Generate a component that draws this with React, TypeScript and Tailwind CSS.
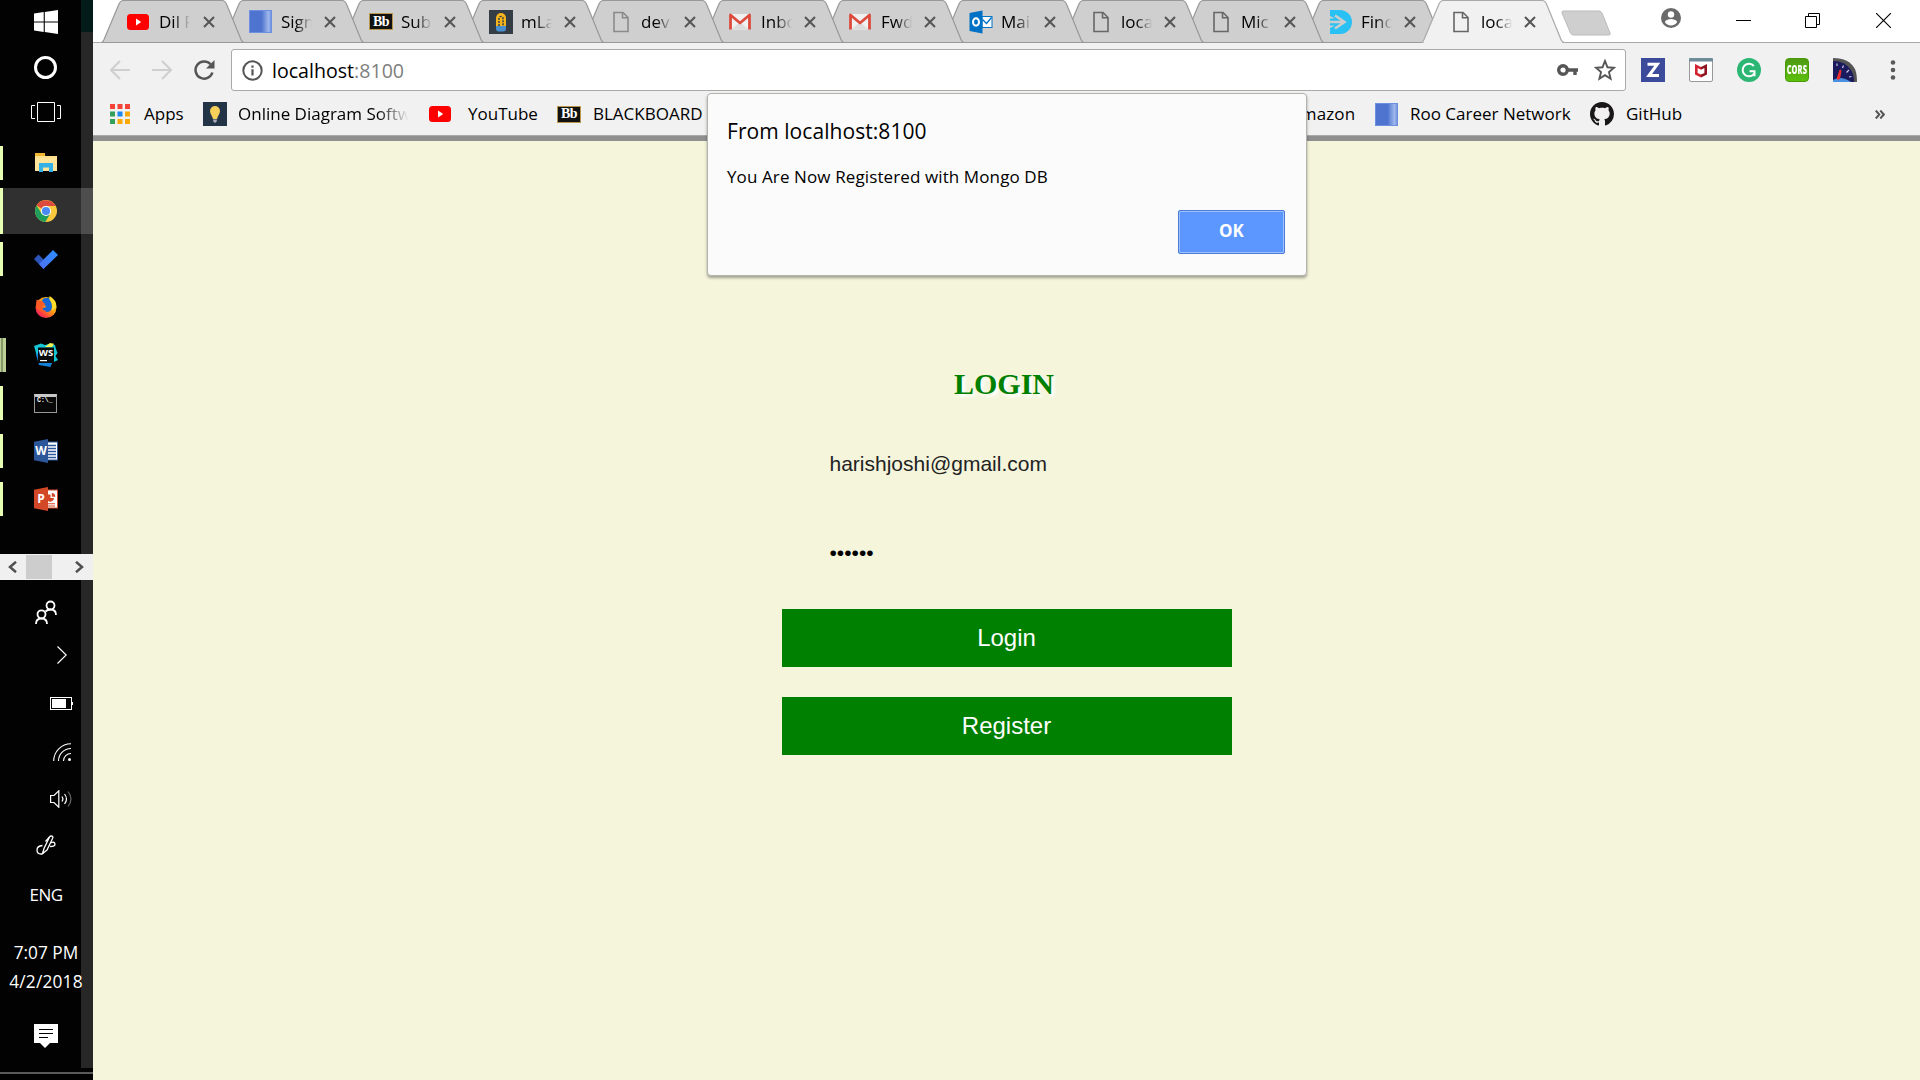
import React, { type ReactNode } from "react";

/* ---------- site icons ---------- */

const YouTubeIcon = () => (
  <svg width="22" height="16" viewBox="0 0 22 16">
    <rect width="22" height="16" rx="3.5" fill="#f00" />
    <path d="M9 4.6 14.2 8 9 11.4Z" fill="#fff" />
  </svg>
);

const BlueSquareIcon = () => (
  <svg width="23" height="23" viewBox="0 0 23 23">
    <defs>
      <linearGradient id="blueSquare" x1="0" x2="1" y1="0" y2="0">
        <stop offset="0.55" stopColor="#4f74d0" />
        <stop offset="0.85" stopColor="#a0b8ec" />
        <stop offset="1" stopColor="#5f84dc" />
      </linearGradient>
    </defs>
    <rect width="23" height="23" fill="url(#blueSquare)" />
    <rect x="0.5" y="0.5" width="22" height="22" fill="none" stroke="#6d8fe0" />
  </svg>
);

const BbIcon = () => (
  <span className="flex h-[17px] w-6 items-center justify-center border border-[#b8964a] bg-[#111] font-['Liberation_Serif',serif] text-[14px] leading-none font-bold tracking-[-0.5px] text-white">
    Bb
  </span>
);

const MLabIcon = () => (
  <svg width="24" height="24" viewBox="0 0 24 24">
    <rect width="24" height="24" fill="#343c45" />
    <path d="M7 16V8a5 5 0 0 1 10 0v8Z" fill="#f7b51c" />
    <path d="M10 16V8.500a2 2 0 0 1 4 0V16" fill="none" stroke="#343c45" strokeWidth="1.500" strokeDasharray="2 1" />
    <path d="M12 7v9" stroke="#f7b51c" strokeWidth="1" />
    <path d="M7 16h10v4l-2 1.500H9L7 20Z" fill="#4a90d0" />
  </svg>
);

const PageIcon = ({ color = "#666" }: { color?: string }) => (
  <svg width="16" height="22" viewBox="0 0 16 22" fill="none" stroke={color} strokeWidth="1.600">
    <path d="M1 1.500h9l5 5v14H1Z" />
    <path d="M9.500 1.500v5.200H15" />
  </svg>
);

const GmailIcon = () => (
  <svg width="22" height="17" viewBox="0 0 22 17">
    <rect x="1" y="1" width="20" height="15.500" rx="1" fill="#f0f0f0" />
    <path d="m3 16 8-7 8 7Z" fill="#dcdcdc" />
    <path d="M1.500 16.500V2L11 10l9.500-8v14.500" fill="none" stroke="#dd4b3e" strokeWidth="2.800" strokeLinejoin="round" />
  </svg>
);

const OutlookIcon = () => (
  <svg width="24" height="24" viewBox="0 0 24 24">
    <rect x="13" y="6.500" width="10" height="11" fill="#fff" stroke="#0072c6" />
    <path d="m13.500 9.500 4 4 5-6" fill="none" stroke="#0072c6" strokeWidth="1.300" />
    <path d="m.5 3 13-2.500v23L.5 21Z" fill="#0072c6" />
    <ellipse cx="7" cy="12" rx="3" ry="3.700" fill="none" stroke="#fff" strokeWidth="2" />
  </svg>
);

const ArrowDIcon = () => (
  <svg width="24" height="24" viewBox="0 0 24 24">
    <path d="M1 0h10a12 12 0 0 1 0 24H1v-6l5-2.500H1V8.500h5L1 6Z" fill="#29c1f3" />
    <path d="M0 12h15M6 5.500 15.500 12 6 18.500" fill="none" stroke="#cdcdcd" strokeWidth="2.600" />
  </svg>
);

const BulbIcon = () => (
  <svg width="24" height="24" viewBox="0 0 24 24">
    <rect width="24" height="24" fill="#243447" />
    <path d="M12 4a5 5 0 0 0-5 5c0 3 2.500 5 3 8h4c.5-3 3-5 3-8a5 5 0 0 0-5-5Z" fill="#f6cf5b" />
    <path d="M10.200 17.500h3.600v2L12 21l-1.800-1.500Z" fill="#aab" />
  </svg>
);

const AppsIcon = () => {
  const colors = ["#f44336", "#f44336", "#f44336", "#34a15b", "#1e88f0", "#fba90a", "#34a15b", "#fba90a", "#fba90a"];
  return (
    <svg width="20" height="20" viewBox="0 0 20 20">
      {colors.map((c, i) => (
        <rect key={i} x={(i % 3) * 7.5} y={Math.floor(i / 3) * 7.5} width="5" height="5" fill={c} />
      ))}
    </svg>
  );
};

const GitHubIcon = () => (
  <svg width="24" height="24" viewBox="0 0 16 16" fill="#191717">
    <path d="M8 0C3.580 0 0 3.580 0 8c0 3.540 2.290 6.530 5.470 7.590.4.070.55-.17.55-.38 0-.19-.01-.82-.01-1.490-2.010.37-2.530-.49-2.690-.94-.09-.23-.48-.94-.82-1.130-.28-.15-.68-.52-.01-.53.630-.01 1.080.58 1.230.82.720 1.210 1.870.87 2.330.66.070-.52.28-.87.510-1.070-1.780-.2-3.640-.89-3.640-3.950 0-.87.310-1.590.82-2.150-.08-.2-.36-1.020.080-2.120 0 0 .67-.21 2.200.82.640-.18 1.320-.27 2-.27s1.360.09 2 .27c1.530-1.040 2.200-.82 2.200-.82.440 1.100.16 1.920.080 2.120.51.560.82 1.270.82 2.150 0 3.070-1.870 3.750-3.650 3.950.29.250.54.730.54 1.480 0 1.070-.01 1.930-.01 2.200 0 .21.150.46.550.38A8.010 8.010 0 0 0 16 8c0-4.420-3.580-8-8-8Z" />
  </svg>
);

/* ---------- tab strip ---------- */

type TabInfo = { title: string; icon: ReactNode; kind: "first" | "site" | "page" | "active" };

const tabs: TabInfo[] = [
  { title: "Dil F", icon: <YouTubeIcon />, kind: "first" },
  { title: "Sign", icon: <BlueSquareIcon />, kind: "site" },
  { title: "Sub", icon: <BbIcon />, kind: "site" },
  { title: "mLa", icon: <MLabIcon />, kind: "site" },
  { title: "dev", icon: <PageIcon color="#8a8a8a" />, kind: "page" },
  { title: "Inbo", icon: <GmailIcon />, kind: "site" },
  { title: "Fwd", icon: <GmailIcon />, kind: "site" },
  { title: "Mai", icon: <OutlookIcon />, kind: "site" },
  { title: "loca", icon: <PageIcon />, kind: "page" },
  { title: "Mic", icon: <PageIcon />, kind: "page" },
  { title: "Find", icon: <ArrowDIcon />, kind: "site" },
  { title: "loca", icon: <PageIcon />, kind: "active" },
];

const iconSlot = {
  first: "ml-1 flex w-[32px] shrink-0",
  site: "ml-[6px] flex w-[32px] shrink-0",
  page: "ml-[10px] flex w-[28px] shrink-0",
  active: "ml-[10px] flex w-[28px] shrink-0",
};

const Tab = ({ tab, index }: { tab: TabInfo; index: number }) => {
  const active = tab.kind === "active";
  return (
    <div className="relative h-[43px] w-[120px] shrink-0" style={{ zIndex: active ? 30 : 20 - index }}>
      <svg className="absolute top-0 -left-[22px]" width="144" height="43" viewBox="-1 0 144 43">
        <path
          d="M-.5 42.500 C1 42 1 41.500 2 39.500 L17 4 Q18.500 .5 21.500 .5 H120 Q123 .5 124.500 4 L139 39.500 Q140 42 142 42.500"
          fill={active ? "#f1f1f1" : "#cfcfcf"}
          stroke={active ? "#a9a9a9" : "#999"}
          strokeWidth="1.200"
        />
        {active && <path d="M2 42.500H140" stroke="#f1f1f1" strokeWidth="1.600" />}
        {!active && <path d="M0 42.500H142" stroke="#999" />}
      </svg>
      <div className="relative flex h-[43px] items-center">
        <span className={iconSlot[tab.kind]}>{tab.icon}</span>
        <span className="w-[37px] shrink-0 text-[17px] leading-6 whitespace-nowrap [mask-image:linear-gradient(to_right,#000_40%,transparent_84%)]">
          {tab.title}
        </span>
        <svg
          className={tab.kind === "first" ? "mt-px ml-[7px]" : "mt-px ml-[6px]"}
          width="12"
          height="12"
          viewBox="0 0 12 12"
        >
          <path d="m1 1 10 10M11 1 1 11" stroke="#555" strokeWidth="2" />
        </svg>
      </div>
    </div>
  );
};

const TabStrip = () => (
  <div className="relative flex h-[43px] border-b border-[#a9a9a9] bg-white pl-[30px]">
    {tabs.map((t, i) => (
      <Tab key={i} tab={t} index={i} />
    ))}
    <svg className="mt-[10px] -ml-[3px]" width="53" height="26" viewBox="0 0 53 26">
      <path d="M3.500 1H39q2 0 3 2l8 20q.8 2-1 2H13.500q-2 0-3-2L2 3Q1.500 1 3.500 1Z" fill="#cfcfcf" stroke="#bbb" />
    </svg>
    <svg className="mt-[8px] ml-[48px]" width="20" height="20" viewBox="0 0 20 20">
      <circle cx="10" cy="10" r="10" fill="#6a6a6a" />
      <circle cx="10" cy="6.500" r="3.200" fill="#fff" />
      <path d="M3.800 14c1-2.200 4-3 6.200-3s5.200.8 6.200 3c-1.300 2.200-3.700 3.500-6.200 3.500S5.100 16.200 3.800 14Z" fill="#fff" />
    </svg>
    <svg className="mt-[20px] ml-[55px]" width="15" height="1">
      <rect width="15" height="1" fill="#000" />
    </svg>
    <svg className="mt-[13px] ml-[54px]" width="15" height="15" viewBox="0 0 15 15" fill="none" stroke="#000">
      <path d="M.5 3.500h11v11H.5ZM3.500 3.500v-3h11v11h-3" />
    </svg>
    <svg className="mt-[13px] ml-[56px]" width="15" height="15" viewBox="0 0 15 15" stroke="#000" strokeWidth="1.100">
      <path d="m0 0 15 15M15 0 0 15" />
    </svg>
  </div>
);

/* ---------- address bar ---------- */

const Toolbar = () => (
  <div className="flex h-[54px] items-center">
    <svg className="ml-[17px]" width="20" height="20" viewBox="0 0 20 20" fill="none" stroke="#cfcfcf" strokeWidth="2">
      <path d="M20 10H2M10 1l-9 9 9 9" />
    </svg>
    <svg className="ml-[22px]" width="20" height="20" viewBox="0 0 20 20" fill="none" stroke="#cfcfcf" strokeWidth="2">
      <path d="M0 10h18M10 1l9 9-9 9" />
    </svg>
    <svg className="ml-[22px]" width="21" height="20" viewBox="0 0 21 20">
      <path d="M16.500 4.200A8.600 8.600 0 1 0 18.400 12.500" fill="none" stroke="#555" strokeWidth="2.500" />
      <path d="M20.500 0v8.500H12Z" fill="#555" />
    </svg>
    <div className="ml-[16px] flex h-[42px] w-[1395px] items-center rounded-[3px] border border-[#a9a9a9] bg-white">
      <svg className="ml-[10px]" width="21" height="21" viewBox="0 0 21 21">
        <circle cx="10.500" cy="10.500" r="9.200" fill="none" stroke="#555" strokeWidth="2" />
        <path d="M9.400 9.200h2.200v6.300H9.400ZM9.400 5.500h2.200v2.200H9.400Z" fill="#555" />
      </svg>
      <span className="ml-[9px] pt-px text-[19.6px] leading-7">
        localhost<span className="text-[#808080]">:8100</span>
      </span>
      <svg className="ml-auto" width="21" height="12" viewBox="0 0 21 12">
        <circle cx="6" cy="6" r="4.300" fill="none" stroke="#555" strokeWidth="3.400" />
        <path d="M10 4.200h11v3.600h-1.300V11h-3.400V7.800H10Z" fill="#555" />
      </svg>
      <svg className="mr-[9px] ml-[16px]" width="22" height="22" viewBox="0 0 22 22">
        <path
          d="m11 2 2.500 6.300 6.500.5-5 4.300 1.600 6.600L11 16.200l-5.600 3.500L7 13.100 2 8.800l6.500-.5Z"
          fill="none"
          stroke="#555"
          strokeWidth="1.900"
        />
      </svg>
    </div>
    <div className="ml-[15px] flex items-center gap-6">
      <svg width="24" height="24" viewBox="0 0 24 24">
        <rect width="24" height="24" fill="#3c4a9c" />
        <path d="M6.500 6.200h9.800L8 17.500h10" fill="none" stroke="#fff" strokeWidth="3" />
      </svg>
      <svg width="24" height="24" viewBox="0 0 24 24">
        <rect x=".5" y=".5" width="23" height="23" rx="1.500" fill="#fff" stroke="#999" />
        <path d="M0 1q0-1 1-1h22q1 0 1 1v2.500H0Z" fill="#6f8c99" />
        <path d="M7.300 7.300 12 9.800v8l-4.700-2.500Z" fill="none" />
        <path d="M6 6l6 3v2.800L8.600 10v5l3.400 1.600v2.900L6 16.500Z" fill="#d3222f" />
        <path d="M18 6l-6 3v2.800l3.400-1.800v5L12 16.600v2.900l6-3Z" fill="#8f1420" />
      </svg>
      <svg width="24" height="24" viewBox="0 0 24 24">
        <circle cx="12" cy="12" r="12" fill="#2bb673" />
        <path d="M16.800 8A6.300 6.300 0 1 0 17 15.800M12.500 13.300h5v5" fill="none" stroke="#fff" strokeWidth="2" />
      </svg>
      <span className="flex size-6 items-center justify-center rounded-[4px] border border-[#4a9a08] bg-linear-to-b from-[#4f9a12] to-[#5cc00c]">
        <span className="scale-x-[0.68] scale-y-110 text-[11px] leading-3 font-extrabold text-white">CORS</span>
      </span>
      <svg width="24" height="24" viewBox="0 0 24 24">
        <path d="M0 0q16 0 22 11 2 5 2 13H0Z" fill="#555" />
        <path d="M0 3q12 0 18 9 3 5 3 12H0Z" fill="#1a1a5c" />
        <path d="M0 24v-2q8-5 18 2Z" fill="#4a90e0" />
        <path d="m4 21 3-9 1 .5L6.500 21Z" fill="#f03030" stroke="#f03030" />
        <path d="M4 5.500v2.500M10.500 7.500l-1 2.500M16 12l-2.500 2.500M18.500 18.500l-2.500.5" stroke="#c8c8e8" strokeWidth="1.200" />
      </svg>
    </div>
    <svg className="ml-[33px]" width="6" height="20" viewBox="0 0 6 20" fill="#5a5a5a">
      <circle cx="3" cy="2.500" r="2.300" />
      <circle cx="3" cy="10" r="2.300" />
      <circle cx="3" cy="17.500" r="2.300" />
    </svg>
  </div>
);

/* ---------- bookmarks ---------- */

const BookmarksBar = () => (
  <div className="flex h-[38px] items-center pb-[4px] text-[17px] leading-6 whitespace-nowrap">
    <span className="ml-[17px] flex w-[34px]"><AppsIcon /></span>
    <span className="w-[59px]">Apps</span>
    <span className="flex w-[35px]"><BulbIcon /></span>
    <span className="w-[174px] [mask-image:linear-gradient(to_right,#000_80%,transparent_98%)]">
      Online Diagram Softw
    </span>
    <span className="ml-[17px] flex w-[39px]"><YouTubeIcon /></span>
    <span className="w-[89px]">YouTube</span>
    <span className="flex w-[36px]"><BbIcon /></span>
    <span className="w-[697px]">BLACKBOARD</span>
    <span className="w-[85px] tracking-[0.1px]">Amazon</span>
    <span className="flex w-[35px]"><BlueSquareIcon /></span>
    <span className="w-[180px]">Roo Career Network</span>
    <span className="flex w-[36px]"><GitHubIcon /></span>
    <span>GitHub</span>
    <svg className="mr-[35px] ml-auto" width="10" height="9" viewBox="0 0 10 9" fill="none" stroke="#555" strokeWidth="2">
      <path d="m.8.500 3.500 4-3.500 4M5.300.500l3.500 4-3.500 4" />
    </svg>
  </div>
);

/* ---------- desktop taskbar ---------- */

const WindowsLogo = () => (
  <svg width="24" height="24" viewBox="0 0 24 24" fill="#fff">
    <path d="M0 3.400 9.700 2v9.500H0ZM10.800 1.900 24 0v11.500H10.800ZM0 12.500h9.700V22L0 20.600ZM10.800 12.500H24V24l-13.200-1.900Z" />
  </svg>
);

const FolderIcon = () => (
  <svg width="22" height="20" viewBox="0 0 22 20">
    <path d="M0 1h8.500l2 2H22v15H0Z" fill="#ffe08a" />
    <path d="M0 0h10v3H0Z" fill="#f2b632" />
    <path d="M0 5h22v13H0Z" fill="#ffe49a" />
    <path d="M4 19v-9h14v9h-4v-4.500H8V19Z" fill="#35b1e8" />
  </svg>
);

const ChromeIcon = () => (
  <svg width="22" height="22" viewBox="0 0 22 22">
    <circle cx="11" cy="11" r="11" fill="#fbc93d" />
    <path d="M1.500 5.500A11 11 0 0 1 20.600 6H11a5 5 0 0 0-4.600 3.200L11 11Z" fill="#dd4b3e" />
    <path d="M1.500 5.500A11 11 0 0 0 10.300 22l4.900-8.200L11 11l-4.400 2.500Z" fill="#1e9e5a" />
    <circle cx="11" cy="11" r="5.100" fill="#fff" />
    <circle cx="11" cy="11" r="4.100" fill="#4a8af4" />
  </svg>
);

const CheckIcon = () => (
  <svg width="24" height="19" viewBox="0 0 24 19">
    <defs>
      <linearGradient id="check" x1="1" y1="0" x2="0" y2="1">
        <stop offset="0" stopColor="#2a8fff" />
        <stop offset="1" stopColor="#4f6ff0" />
      </linearGradient>
    </defs>
    <path d="m0 9 4.500-4.500 8 8L9.500 19Z" fill="#2b55b8" />
    <path d="m5 14 14-14 5 5L9.500 19Z" fill="url(#check)" />
  </svg>
);

const FirefoxIcon = () => (
  <svg width="22" height="22" viewBox="0 0 22 22">
    <defs>
      <linearGradient id="fox" x1="1" y1="0" x2="0" y2="1">
        <stop offset="0.1" stopColor="#ffe226" />
        <stop offset="0.45" stopColor="#ff9a16" />
        <stop offset="0.75" stopColor="#ff3a44" />
        <stop offset="1" stopColor="#e31587" />
      </linearGradient>
    </defs>
    <circle cx="11" cy="11.500" r="10.500" fill="url(#fox)" />
    <path d="M7 4q2.500-3 7-2l2.500 4.500.5 5q-1 4.500-5 4.500-4 0-5-3.500l4.500-1.500L8 7.500Z" fill="#1667d8" />
    <path d="M14.500 0q-1 3 1.500 6t.5 8.500q3.500-1.500 5-4Q21.500 4 14.500 0Z" fill="#ffdd2b" />
    <path d="M1.500 3.500Q4 5 6.500 5L10.500 8 7 10.500q0 4 4.500 4.500-3 2.500-6 0L1 12Z" fill="#ff5a26" />
  </svg>
);

const WebStormIcon = () => (
  <span className="relative flex size-6 items-start justify-center">
    <svg className="absolute inset-0" width="24" height="24" viewBox="0 0 24 24">
      <path d="m0 3 7-2.500 4 1.500 5-1.500 5 1.500 1 4 1.500 4-2 3 2.500 4-6 3-1 2-12-2Z" fill="#14c7d4" />
      <path d="m1.500 10 3.500 12 11.500 2 1.500-5Z" fill="#1481d8" />
      <path d="m11 4 5-4 4 .8-2 3.200Z" fill="#f4ef4f" />
      <rect x="4" y="4.500" width="16" height="15.500" fill="#0a0a0a" />
      <rect x="6" y="17" width="7" height="1.200" fill="#fff" />
    </svg>
    <span className="relative mt-[5px] text-[9.500px] leading-[9px] font-bold text-white">WS</span>
  </span>
);

const TerminalIcon = () => (
  <span className="mr-px flex h-[19px] w-[23px] flex-col border border-[#999] border-t-[3px] border-t-[#c8c8c8] bg-[#080808] font-['Liberation_Mono',monospace] text-[6.500px] leading-[8px] font-bold text-white">
    <span className="pl-[2px]">C:\_</span>
  </span>
);

const OfficeIcon = ({ letter }: { letter: "W" | "P" }) => (
  <span className="relative flex size-6 items-center">
    <svg className="absolute inset-0" width="24" height="24" viewBox="0 0 24 24">
      <rect x="12" y="3" width="11.500" height="18" fill="#fff" stroke={letter === "W" ? "#2b579a" : "#d24726"} />
      {letter === "W" ? (
        <path d="M14 6.500h8M14 9.500h8M14 12.500h8M14 15.500h8M14 18.500h8" stroke="#2b579a" strokeWidth="1.300" />
      ) : (
        <>
          <path d="M14 7.500h2.500V11h3.500a3.800 3.800 0 0 1-6 3Z" fill="#d24726" />
          <path d="M17.800 6a3.800 3.800 0 0 1 3.500 3.700h-3.500Z" fill="#d24726" />
          <path d="M14 16.800h7M14 19h7" stroke="#d24726" strokeWidth="1.100" />
        </>
      )}
      <path d="M0 2.700 14 0v24L0 21.300Z" fill={letter === "W" ? "#2b579a" : "#d24726"} />
    </svg>
    <span className="relative w-[14px] text-center text-[12px] leading-none font-bold text-white">{letter}</span>
  </span>
);

const apps: { icon: ReactNode; mark: "none" | "single" | "active" | "stack" }[] = [
  { icon: <FolderIcon />, mark: "single" },
  { icon: <ChromeIcon />, mark: "active" },
  { icon: <CheckIcon />, mark: "single" },
  { icon: <FirefoxIcon />, mark: "none" },
  { icon: <WebStormIcon />, mark: "stack" },
  { icon: <TerminalIcon />, mark: "single" },
  { icon: <OfficeIcon letter="W" />, mark: "single" },
  { icon: <OfficeIcon letter="P" />, mark: "single" },
];

const AppRow = ({ icon, mark }: (typeof apps)[number]) => (
  <div className="flex h-12 items-center">
    <div className={mark === "active" ? "flex h-[46px] w-full items-center bg-[#303030]" : "flex h-[46px] w-full items-center"}>
      <div className="flex w-[6px] items-center self-stretch">
        {mark === "single" && <span className="h-[34px] w-[3px] bg-[#e6ffb3]" />}
        {mark === "active" && <span className="h-[46px] w-[3px] bg-[#e6ffb3]" />}
        {mark === "stack" && <span className="h-[34px] w-[6px] border-r-[3px] border-l border-[#bccf94] bg-[#86966a]" />}
      </div>
      <div className="flex w-20 justify-center">{icon}</div>
    </div>
  </div>
);

const Taskbar = () => (
  <aside className="relative flex h-[1080px] w-[93px] shrink-0 flex-col overflow-hidden bg-[#020202] text-white">
    <div className="flex h-[138px] w-[92px] flex-col items-center">
      <div className="flex h-[44px] items-center"><WindowsLogo /></div>
      <div className="flex h-[46px] items-center">
        <span className="mr-px size-[23px] rounded-full border-[3px] border-white" />
      </div>
      <div className="flex h-[44px] items-center">
        <svg width="30" height="20" viewBox="0 0 30 20" fill="none" stroke="#fff">
          <path d="M6.500.5h17v19h-17ZM4 3.500H.5v13H4M26 3.500h3.500v13H26" />
        </svg>
      </div>
    </div>
    <div className="mt-px flex flex-col">
      {apps.map((a, i) => (
        <AppRow key={i} icon={a.icon} mark={a.mark} />
      ))}
    </div>

    <div className="relative z-10 mt-[31px] flex h-[26px] items-center justify-between bg-[#f0f0f0] pr-[9px] pl-2">
      <svg width="9" height="12" viewBox="0 0 9 12" fill="none" stroke="#505050" strokeWidth="2.500">
        <path d="M8 .8 2 6l6 5.200" />
      </svg>
      <span className="mr-[14px] h-6 w-[26px] bg-[#cdcdcd]" />
      <svg width="9" height="12" viewBox="0 0 9 12" fill="none" stroke="#505050" strokeWidth="2.500">
        <path d="M1 .8 7 6l-6 5.200" />
      </svg>
    </div>

    <div className="flex flex-col items-start">
      <svg className="mt-5 ml-[35px]" width="22" height="25" viewBox="0 0 22 25" fill="none" stroke="#fff" strokeWidth="1.800">
        <circle cx="15.500" cy="5.500" r="4" />
        <circle cx="6.500" cy="14.300" r="4" />
        <path d="M1 24q0-5.500 5.500-5.500T12 24M10.500 11.500q2-2 5-2 5.500 0 5.500 5.500" />
      </svg>
      <svg className="mt-[21px] ml-[57px]" width="10" height="18" viewBox="0 0 10 18" fill="none" stroke="#fff" strokeWidth="1.200">
        <path d="m.5.500 8.700 8.500L.5 17.500" />
      </svg>
      <svg className="mt-[33px] ml-[50px]" width="23" height="13" viewBox="0 0 23 13">
        <rect x=".5" y=".5" width="21" height="12" fill="none" stroke="#fff" />
        <path d="M2 2h14v9H2ZM22 5h1v3h-1Z" fill="#fff" />
      </svg>
      <svg className="mt-[33px] ml-[53px]" width="18" height="18" viewBox="0 0 18 18" fill="none" stroke="#fff" strokeWidth="1.100">
        <path d="M.7 18A17.300 17.300 0 0 1 18 .7M5.500 18A12.500 12.500 0 0 1 18 5.500M10.500 18a7.500 7.500 0 0 1 7.500-7.500" />
        <circle cx="16.500" cy="16.500" r="1.500" fill="#fff" stroke="none" />
      </svg>
      <svg className="mt-[29px] ml-[50px]" width="22" height="18" viewBox="0 0 22 18" fill="none" stroke="#fff" strokeWidth="1.200">
        <path d="M.6 5.500h3.400L8.800.8v16.400L4 12.500H.6Z" />
        <path d="M12 6.500q1.800 2.500 0 5M14.500 4q4 5 0 10" />
        <path d="M18 1.500q6 7.500 0 15" stroke="#666" />
      </svg>
      <svg className="mt-[27px] ml-[36px]" width="20" height="20" viewBox="0 0 20 20" fill="none" stroke="#fff" strokeWidth="1.300">
        <path d="M6.500 18.500 8 13.500 13.500 2q1-1.500 2.500-.8t.5 2.300L11 15Z" />
        <path d="M13.500 2 9.500 6.500M6.500 10.500q-5.500.5-5.500 4.500t4 4q2 0 3-1.500M14.500 8q4-2 4.500 1 .300 2.500-5 2.500" />
      </svg>
    </div>
    <div className="relative z-10 mt-[28px] flex w-[92px] flex-col items-center whitespace-nowrap">
      <span className="text-[17px] leading-6 tracking-[-0.5px]">ENG</span>
      <span className="mt-[31px] text-[17.300px] leading-[29px]">7:07 PM</span>
      <span className="text-[17.300px] leading-[29px] tracking-[0.200px]">4/2/2018</span>
      <svg className="mt-[28px]" width="24" height="24" viewBox="0 0 24 24">
        <path d="M0 0h24v19h-8l-5 5-5-5H0Z" fill="#fff" />
        <path d="M5 5.500h14M5 9.500h14M5 13.500h9" stroke="#000" />
      </svg>
    </div>
    <div className="mt-auto mb-[6px] h-[2px] bg-[#5a5a5a]" />
    <div className="absolute top-0 right-0 flex h-[1068px] w-3 flex-col bg-white/15">
      <div className="h-8 bg-[#031c1a]" />
    </div>
  </aside>
);

/* ---------- page ---------- */

const LoginPage = () => (
  <main className="flex grow flex-col items-center bg-[#f5f5dc] font-['Liberation_Sans',Arial,sans-serif]">
    <div className="flex w-[450px] flex-col pt-[226px]">
      <h1 className="mr-[5px] text-center font-['Liberation_Serif',serif] text-[30px] leading-[34px] font-bold text-[#008000] [text-shadow:3px_3px_3px_#fff]">
        LOGIN
      </h1>
      <div className="mt-[51px] ml-[48px] text-[21px] leading-6 text-[#222]">harishjoshi@gmail.com</div>
      <div className="mt-[65px] ml-[48px] text-[21px] leading-6 text-black">••••••</div>
      <button className="mt-[44px] h-[58px] bg-[#008000] text-2xl text-white">Login</button>
      <button className="mt-[30px] h-[58px] bg-[#008000] text-2xl text-white">Register</button>
    </div>
  </main>
);

const AlertDialog = () => (
  <div
    role="alertdialog"
    className="absolute top-[93px] left-[707px] z-50 flex h-[183px] w-[600px] flex-col rounded-[4px] border border-[#b4b4ae] bg-[#fbfbfb] px-[19px] shadow-[0_2px_3px_rgba(0,0,0,0.35)]"
  >
    <h2 className="mt-[23px] text-[21px] leading-7 tracking-[0.06px]">From localhost:8100</h2>
    <p className="mt-[20px] text-[17px] leading-6 tracking-[0.11px]">You Are Now Registered with Mongo DB</p>
    <button className="mt-[21px] mr-[2px] h-[44px] w-[107px] self-end rounded-[2px] border border-[#4b7bd6] bg-[#5b97ff] pb-[2px] text-[17px] font-bold text-white shadow-[inset_0_0_0_1px_#9dc2ff]">
      OK
    </button>
  </div>
);

export default function App() {
  return (
    <div className="relative flex h-[1080px] w-[1920px] overflow-hidden bg-[#f1f1f1] font-['Open_Sans','Noto_Sans',sans-serif] text-black">
      <Taskbar />
      <div className="flex grow flex-col">
        <TabStrip />
        <Toolbar />
        <BookmarksBar />
        <div className="h-[6px] shrink-0 border-t border-[#a9a9a9] bg-[#8f8f8f]" />
        <LoginPage />
      </div>
      <AlertDialog />
    </div>
  );
}
